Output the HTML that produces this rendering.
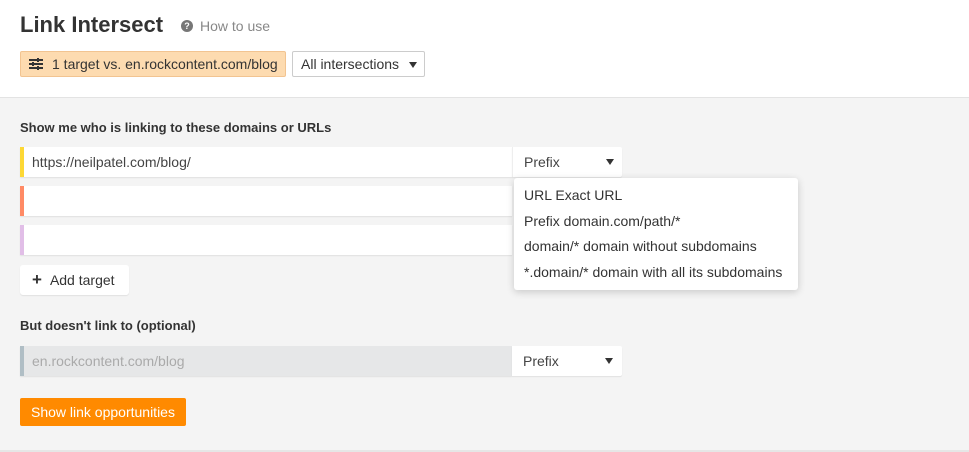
<!DOCTYPE html>
<html><head><style>
*{box-sizing:border-box;margin:0;padding:0}
body{width:969px;height:452px;overflow:hidden;font-family:"Liberation Sans",Arial,sans-serif;background:#f4f4f4;position:relative;color:#333}
.top{position:absolute;left:0;top:0;width:969px;height:98px;background:#fff;border-bottom:1px solid #e3e3e3}
.abs{position:absolute}
h1{position:absolute;left:20px;top:12px;font-size:22px;font-weight:bold;color:#333}
.how{left:181px;top:18px;font-size:14px;color:#888;display:flex;align-items:center}
.how i{display:inline-block;width:12px;height:12px;border-radius:50%;background:#777;color:#fff;font-size:9px;font-style:normal;font-weight:bold;text-align:center;line-height:12px;margin-right:7px}
.tag{left:20px;top:51px;width:266px;height:26px;background:#fddbb0;border:1px solid #f2c491;border-radius:2px;font-size:14px;color:#333;line-height:24px;padding-left:31px}
.sel{left:292px;top:51px;width:133px;height:26px;background:#fff;border:1px solid #ccc;border-radius:2px;font-size:14px;line-height:24px;padding-left:8px}
.tri{position:absolute;width:0;height:0;border-left:4px solid transparent;border-right:4px solid transparent;border-top:6px solid #333}
.lbl{font-size:13px;font-weight:bold;color:#333}
.inp{left:20px;width:492px;height:30px;background:#fff;box-shadow:0 1px 1px rgba(0,0,0,.08);font-size:14px;line-height:30px;padding-left:12px;color:#444}
.bar{position:absolute;left:0;top:0;width:4px;height:100%}
.pre{left:512px;width:110px;height:30px;background:#fff;border-left:1px solid #eee;box-shadow:0 1px 1px rgba(0,0,0,.08);font-size:14px;line-height:30px;padding-left:11px;color:#444;border-radius:0 2px 2px 0}
.dd{left:514px;top:178px;width:284px;height:112px;background:#fff;border-radius:3px;box-shadow:0 2px 8px rgba(0,0,0,.18);font-size:14px;color:#333;padding:9px 0 0 10px}
.dd div{height:25.7px}
.btn{left:20px;top:265px;width:109px;height:30px;background:#fff;border-radius:3px;box-shadow:0 1px 1px rgba(0,0,0,.08);font-size:14px;line-height:30px;padding-left:12px;color:#333}
.go{left:20px;top:398px;width:166px;height:28px;background:#ff8a00;border-radius:2px;color:#fff;font-size:14px;line-height:28px;text-align:center}
</style></head><body>
<div class="top"></div>
<h1>Link Intersect</h1>
<div class="abs how"><i>?</i>How to use</div>
<div class="abs tag"><svg style="position:absolute;left:8px;top:6px" width="14" height="12" viewBox="0 0 14 12"><g fill="#333"><rect x="0" y="1" width="14" height="2"/><rect x="0" y="5" width="14" height="2"/><rect x="0" y="9" width="14" height="2"/><rect x="8" y="0" width="2" height="4"/><rect x="3" y="4" width="2" height="4"/><rect x="8" y="8" width="2" height="4"/></g></svg>1 target vs. en.rockcontent.com/blog</div>
<div class="abs sel">All intersections<span class="tri" style="left:116px;top:10px"></span></div>
<div class="abs lbl" style="left:20px;top:120px">Show me who is linking to these domains or URLs</div>
<div class="abs inp" style="top:147px"><span class="bar" style="background:#fdd835"></span>https://neilpatel.com/blog/</div>
<div class="abs pre" style="top:147px">Prefix<span class="tri" style="left:93px;top:12px"></span></div>
<div class="abs inp" style="top:186px"><span class="bar" style="background:#ff8a65"></span></div>
<div class="abs inp" style="top:225px"><span class="bar" style="background:#e1bee7"></span></div>
<div class="abs dd"><div>URL Exact URL</div><div>Prefix domain.com/path/*</div><div>domain/* domain without subdomains</div><div>*.domain/* domain with all its subdomains</div></div>
<div class="abs btn"><b style="font-size:17px;margin-right:8px">+</b>Add target</div>
<div class="abs lbl" style="left:20px;top:318px">But doesn't link to (optional)</div>
<div class="abs inp" style="top:346px;background:#e6e7e8;color:#aaa"><span class="bar" style="background:#b0bec5"></span>en.rockcontent.com/blog</div>
<div class="abs pre" style="top:346px;border-left:none">Prefix<span class="tri" style="left:93px;top:12px"></span></div>
<div class="abs go">Show link opportunities</div>
<div class="abs" style="left:0;top:450px;width:969px;height:2px;background:#e6e6e6"></div>
</body></html>
